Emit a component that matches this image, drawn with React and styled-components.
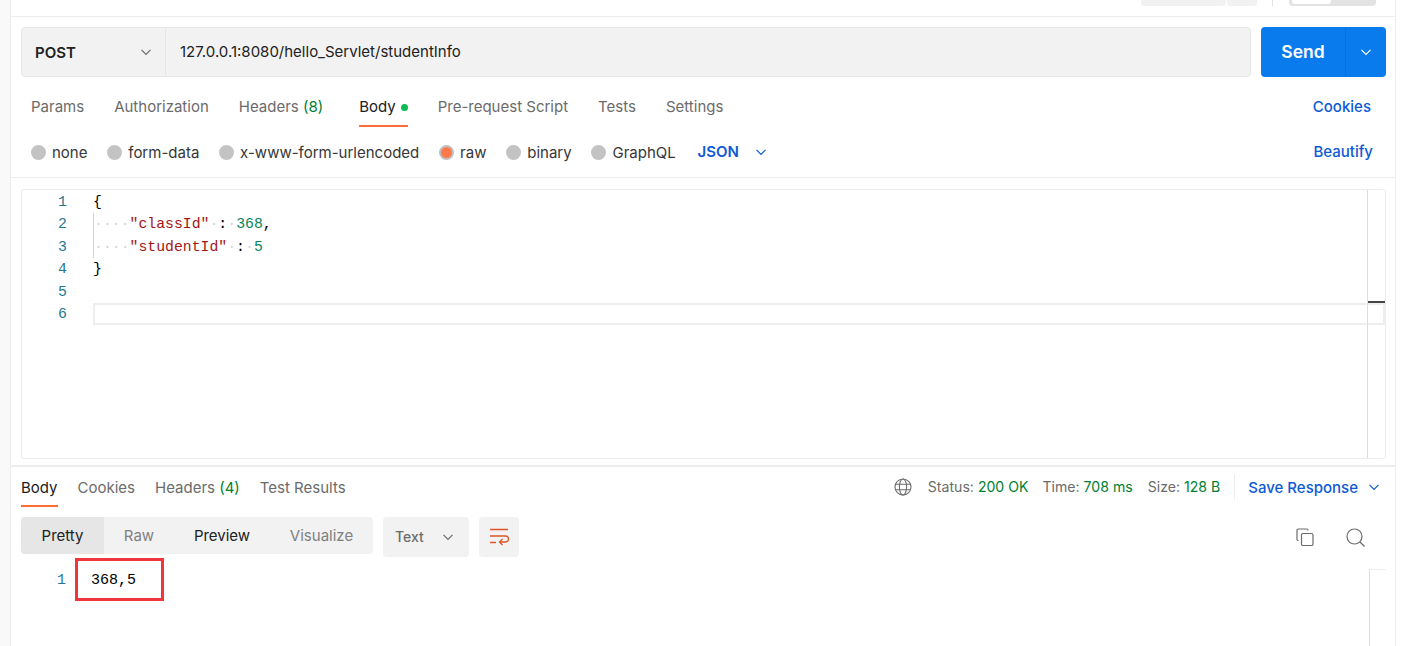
import React from "react";
import styled, { createGlobalStyle } from "styled-components";

const Global = createGlobalStyle`
  html, body { margin: 0; padding: 0; background: #fff; }
  * { box-sizing: border-box; }
  body { font-family: Inter, "Liberation Sans", sans-serif; font-size: 15px; color: #6b6b6b; overflow: hidden; }
`;

const Page = styled.div`
  display: flex;
  width: 1413px;
  height: 646px;
  overflow: hidden;
  background: #fff;
`;
const Gutter = styled.div`
  width: 11px;
  flex: none;
  background: #f9f9f9;
  border-right: 1px solid #ededed;
`;
const Main = styled.main`
  width: 1385px;
  flex: none;
  display: flex;
  flex-direction: column;
  border-right: 1px solid #ededed;
`;
const TopBar = styled.div`
  height: 17px;
  flex: none;
  border-bottom: 1px solid #ededed;
  display: flex;
  justify-content: flex-end;
  align-items: flex-start;
  padding-right: 19px;
`;
const Stub = styled.div`
  height: 6px;
  width: ${(p) => p.$w}px;
  margin-left: ${(p) => p.$ml}px;
  background: #f2f2f2;
  border-radius: 0 0 3px 3px;
`;
const StubLine = styled.div`
  width: 1px;
  height: 6px;
  margin-left: 15px;
  background: #e0e0e0;
`;
const Toggle = styled.div`
  width: 87px;
  height: 6px;
  margin-left: 16px;
  background: #e3e3e3;
  border-radius: 0 0 4px 4px;
  padding: 0 0 0 3px;
`;
const ToggleKnob = styled.div`
  width: 39px;
  height: 4px;
  background: #fff;
  border-radius: 0 0 3px 3px;
`;
const UrlRow = styled.div`
  display: flex;
  gap: 10px;
  margin: 10px 9px 0 10px;
  height: 50px;
  flex: none;
`;
const UrlBox = styled.div`
  flex: 1;
  display: flex;
  align-items: center;
  background: #f2f2f2;
  border: 1px solid #e6e6e6;
  border-radius: 4px;
`;
const MethodSelect = styled.div`
  width: 144px;
  height: 100%;
  display: flex;
  align-items: center;
  justify-content: space-between;
  padding: 0 13px 0 13px;
  border-right: 1px solid #e6e6e6;
  font-weight: 600;
  font-size: 15px;
  color: #212121;
`;
const UrlText = styled.div`
  padding: 0 0 1px 14px;
  font-size: 15px;
  color: #212121;
`;
const SendBtn = styled.div`
  width: 125px;
  display: flex;
  background: #097bed;
  border-radius: 4px;
  color: #fff;
  font-weight: 600;
  font-size: 17.5px;
`;
const SendLabel = styled.div`
  width: 85px;
  display: flex;
  align-items: center;
  justify-content: center;
  padding-bottom: 2px;
  border-right: 1px solid #0a6fd6;
`;
const SendCaret = styled.div`
  flex: 1;
  display: flex;
  align-items: center;
  justify-content: center;
`;
const Tabs = styled.div`
  display: flex;
  align-items: flex-start;
  height: ${(p) => p.$h}px;
  margin-top: ${(p) => p.$mt}px;
  padding: 0 ${(p) => p.$pr || 0}px 0 ${(p) => p.$pl}px;
  gap: ${(p) => p.$gap}px;
  flex: none;
`;
const Tab = styled.div`
  height: 100%;
  display: flex;
  gap: 5px;
  margin-left: ${(p) => p.$ml || 0}px;
  padding-top: ${(p) => p.$pt}px;
  line-height: 20px;
  font-size: 15px;
  white-space: nowrap;
  color: ${(p) => (p.$active ? "#212121" : "#6b6b6b")};
  border-bottom: 2px solid ${(p) => (p.$active ? "#ff6c37" : "transparent")};
`;
const Green = styled.span`
  color: #007f31;
`;
const Dot = styled.span`
  width: 7px;
  height: 7px;
  border-radius: 50%;
  background: #0cbb52;
  align-self: flex-start;
  margin-top: 7px;
`;
const RightLink = styled.div`
  margin-left: auto;
  padding-top: ${(p) => p.$pt}px;
  line-height: 20px;
  font-weight: 500;
  font-size: 15px;
  color: #0d5ad6;
`;
const BodyRow = styled.div`
  height: 51px;
  flex: none;
  display: flex;
  align-items: center;
  padding: 0 22px 0 20px;
  border-bottom: 1px solid #ededed;
`;
const Radio = styled.label`
  display: flex;
  align-items: center;
  gap: 6px;
  margin-right: 19.8px;
  color: #212121;
  opacity: 0.9;
  font-size: 15px;
  white-space: nowrap;
`;
const RadioMark = styled.span`
  width: 15px;
  height: 15px;
  border-radius: 50%;
  background: ${(p) => (p.$on ? "#ff6c37" : "#bdbdbd")};
  border: ${(p) => (p.$on ? "2px solid #b9b9b9" : "none")};
  flex: none;
`;
const JsonSel = styled.div`
  display: flex;
  align-items: center;
  gap: 16px;
  color: #0d5ad6;
  font-weight: 600;
  font-size: 15px;
  margin-left: 2px;
  margin-top: -1px;
`;
const EditorBox = styled.div`
  margin: 11px 9px 0 10px;
  height: 270px;
  flex: none;
  display: flex;
  border: 1px solid #ededed;
  border-radius: 3px;
  position: relative;
`;
const LineNums = styled.div`
  width: 71px;
  flex: none;
  font-family: "Liberation Mono", monospace;
  font-size: 14.8px;
  line-height: 22.4px;
  color: #237893;
  text-align: right;
  padding: 1px 26px 0 0;
`;
const CodeArea = styled.div`
  flex: 1;
  padding-top: 1px;
  font-family: "Liberation Mono", monospace;
  font-size: 14.8px;
  line-height: 22.4px;
  color: #000;
`;
const CodeLine = styled.div`
  height: 22.4px;
  white-space: pre;
  ${(p) => p.$guide && "border-left: 1px solid #d3d3d3;"}
  ${(p) =>
    p.$current &&
    "border: 2px solid #eeeeee; margin-right: -18px; position: relative;"}
`;
const Ws = styled.span`
  color: #d5d5d5;
`;
const Str = styled.span`
  color: #a31515;
`;
const Num = styled.span`
  color: #098658;
`;
const Ruler = styled.div`
  width: 18px;
  flex: none;
  border-left: 1px solid #dcdcdc;
  position: relative;
`;
const RulerMark = styled.div`
  position: absolute;
  left: 0;
  right: 0;
  top: 111px;
  height: 2px;
  background: #444;
`;
const Divider = styled.div`
  height: 2px;
  flex: none;
  margin-top: 6px;
  background: #ededed;
`;
const RespHead = styled.div`
  display: flex;
  align-items: flex-start;
  padding: 0 9px 0 10px;
  height: 40px;
  flex: none;
`;
const Meta = styled.div`
  margin-left: auto;
  display: flex;
  align-items: center;
  height: 40px;
  white-space: nowrap;
`;
const MetaItem = styled.span`
  margin-left: ${(p) => p.$ml}px;
  padding-bottom: 2px;
  font-size: 14.1px;
  color: #6b6b6b;
`;
const Save = styled.div`
  display: flex;
  align-items: center;
  gap: 10px;
  margin-left: 14px;
  padding-left: 13px;
  height: 26px;
  border-left: 1px solid #ededed;
  color: #0d5ad6;
  font-weight: 500;
  font-size: 15px;
  padding-right: 6px;
`;
const RespTools = styled.div`
  display: flex;
  align-items: flex-start;
  gap: 10px;
  padding: 10px 30px 0 10px;
  flex: none;
  height: 50px;
`;
const Segments = styled.div`
  display: flex;
  width: 352px;
  height: 37px;
  background: #f2f2f2;
  border-radius: 4px;
  overflow: hidden;
`;
const Segment = styled.div`
  width: ${(p) => p.$w}px;
  display: flex;
  align-items: center;
  justify-content: center;
  background: ${(p) => (p.$on ? "#e6e6e6" : "transparent")};
  color: ${(p) => (p.$dark ? "#212121" : "#808080")};
  font-size: 15px;
`;
const SmallSelect = styled.div`
  width: 86px;
  height: 40px;
  background: #f2f2f2;
  border-radius: 4px;
  display: flex;
  align-items: center;
  justify-content: space-between;
  padding: 0 15px 0 12px;
  font-weight: 500;
  font-size: 14px;
  color: #6b6b6b;
`;
const SelectLabel = styled.span`
  padding-bottom: 2px;
`;
const WrapBtn = styled.div`
  width: 40px;
  height: 40px;
  background: #f2f2f2;
  border-radius: 4px;
  display: flex;
  align-items: center;
  justify-content: center;
`;
const ToolIcons = styled.div`
  margin-left: auto;
  display: flex;
  gap: 32px;
  padding-top: 11px;
`;
const Result = styled.div`
  display: flex;
  flex: 1;
`;
const ResultNum = styled.div`
  width: 55px;
  flex: none;
  text-align: right;
  padding-top: 13px;
  font-family: "Liberation Mono", monospace;
  font-size: 14.8px;
  line-height: 20px;
  color: #237893;
`;
const ResultBody = styled.div`
  flex: 1;
  display: flex;
  padding-left: 9px;
  margin-top: -8px;
  padding-top: 9px;
`;
const RedBox = styled.div`
  width: 89px;
  height: 43px;
  flex: none;
  border: 3px solid #f2353c;
  padding: 10px 0 0 13px;
  font-family: "Liberation Mono", monospace;
  font-size: 15px;
  line-height: 20px;
  color: #000;
`;
const ResultRuler = styled.div`
  margin-left: auto;
  margin-right: 9px;
  margin-top: 11px;
  width: 17px;
  border-left: 1px solid #dcdcdc;
  border-top: 1px solid #ededed;
`;

const Chevron = ({ color = "#6b6b6b", w = 12 }) => (
  <svg width={w} height={w} viewBox="0 0 12 12" fill="none">
    <path d="M1.5 3.8 6 8.3l4.5-4.5" stroke={color} strokeWidth="1.2" />
  </svg>
);

const Globe = () => (
  <svg width="18" height="18" viewBox="0 0 18 18" fill="none" stroke="#6b6b6b" strokeWidth="1.1">
    <circle cx="9" cy="9" r="8" />
    <ellipse cx="9" cy="9" rx="3.6" ry="8" />
    <path d="M1.5 6.2h15M1.5 11.8h15" />
  </svg>
);

const CopyIcon = () => (
  <svg width="18" height="18" viewBox="0 0 18 18" fill="none" stroke="#6b6b6b" strokeWidth="1.2">
    <rect x="5.5" y="5.5" width="11.5" height="12" rx="1.5" />
    <path d="M2.5 12.5h-.2A1.3 1.3 0 0 1 1 11.2V2.3A1.3 1.3 0 0 1 2.3 1h8.4A1.3 1.3 0 0 1 12 2.3v.2" />
  </svg>
);

const SearchIcon = () => (
  <svg width="19" height="19" viewBox="0 0 19 19" fill="none" stroke="#6b6b6b" strokeWidth="1.2">
    <circle cx="8.5" cy="8.5" r="7.5" />
    <path d="M14 14l4.5 4.5" />
  </svg>
);

const WrapIcon = () => (
  <svg width="20" height="18" viewBox="0 0 20 18" fill="none" stroke="#e0532a" strokeWidth="1.3">
    <path d="M1 1.5h18M1 8h15.5a2.6 2.6 0 0 1 0 6H11M13.5 11l-3 3 3 3M1 14.5h6" />
  </svg>
);

const reqTabs = ["Params", "Authorization", "Headers", "Body", "Pre-request Script", "Tests", "Settings"];
const radios = [
  ["none"],
  ["form-data"],
  ["x-www-form-urlencoded"],
  ["raw", true],
  ["binary"],
  ["GraphQL"],
];

export default function App() {
  return (
    <Page>
      <Global />
      <Gutter />
      <Main>
        <TopBar>
          <Stub $w={85} $ml={0} />
          <Stub $w={30} $ml={1} />
          <StubLine />
          <Toggle>
            <ToggleKnob />
          </Toggle>
        </TopBar>
        <UrlRow>
          <UrlBox>
            <MethodSelect>
              POST
              <Chevron />
            </MethodSelect>
            <UrlText>127.0.0.1:8080/hello_Servlet/studentInfo</UrlText>
          </UrlBox>
          <SendBtn>
            <SendLabel>Send</SendLabel>
            <SendCaret>
              <Chevron color="#fff" />
            </SendCaret>
          </SendBtn>
        </UrlRow>
        <Tabs $h={33} $mt={17} $pl={20} $pr={24} $gap={30}>
          {reqTabs.map((t) => (
            <Tab key={t} $pt={3} $active={t === "Body"} $ml={t === "Body" ? 6 : 0}>
              {t === "Headers" ? (
                <span>
                  Headers <Green>(8)</Green>
                </span>
              ) : (
                t
              )}
              {t === "Body" && <Dot />}
            </Tab>
          ))}
          <RightLink $pt={3}>Cookies</RightLink>
        </Tabs>
        <BodyRow>
          {radios.map(([label, on]) => (
            <Radio key={label}>
              <RadioMark $on={on} />
              {label}
            </Radio>
          ))}
          <JsonSel>
            JSON
            <Chevron color="#0d5ad6" />
          </JsonSel>
          <RightLink $pt={0}>Beautify</RightLink>
        </BodyRow>
        <EditorBox>
          <LineNums>
            {[1, 2, 3, 4, 5, 6].map((n) => (
              <div key={n}>{n}</div>
            ))}
          </LineNums>
          <CodeArea>
            <CodeLine>{"{"}</CodeLine>
            <CodeLine $guide>
              <Ws>····</Ws>
              <Str>"classId"</Str>
              <Ws>·</Ws>:<Ws>·</Ws>
              <Num>368</Num>,
            </CodeLine>
            <CodeLine $guide>
              <Ws>····</Ws>
              <Str>"studentId"</Str>
              <Ws>·</Ws>:<Ws>·</Ws>
              <Num>5</Num>
            </CodeLine>
            <CodeLine>{"}"}</CodeLine>
            <CodeLine />
            <CodeLine $current />
          </CodeArea>
          <Ruler>
            <RulerMark />
          </Ruler>
        </EditorBox>
        <Divider />
        <RespHead>
          <Tabs $h={40} $mt={0} $pl={0} $gap={20}>
            <Tab $pt={11} $active>
              Body
            </Tab>
            <Tab $pt={11}>Cookies</Tab>
            <Tab $pt={11}>
              <span>
                Headers <Green>(4)</Green>
              </span>
            </Tab>
            <Tab $pt={11}>Test Results</Tab>
          </Tabs>
          <Meta>
            <Globe />
            <MetaItem $ml={16}>
              Status: <Green>200 OK</Green>
            </MetaItem>
            <MetaItem $ml={14}>
              Time: <Green>708 ms</Green>
            </MetaItem>
            <MetaItem $ml={15}>
              Size: <Green>128 B</Green>
            </MetaItem>
            <Save>
              Save Response
              <Chevron color="#0d5ad6" />
            </Save>
          </Meta>
        </RespHead>
        <RespTools>
          <Segments>
            <Segment $w={83} $on $dark>
              Pretty
            </Segment>
            <Segment $w={70}>Raw</Segment>
            <Segment $w={96} $dark>
              Preview
            </Segment>
            <Segment $w={103}>Visualize</Segment>
          </Segments>
          <SmallSelect>
            <SelectLabel>Text</SelectLabel>
            <Chevron />
          </SmallSelect>
          <WrapBtn>
            <WrapIcon />
          </WrapBtn>
          <ToolIcons>
            <CopyIcon />
            <SearchIcon />
          </ToolIcons>
        </RespTools>
        <Result>
          <ResultNum>1</ResultNum>
          <ResultBody>
            <RedBox>368,5</RedBox>
            <ResultRuler />
          </ResultBody>
        </Result>
      </Main>
    </Page>
  );
}
